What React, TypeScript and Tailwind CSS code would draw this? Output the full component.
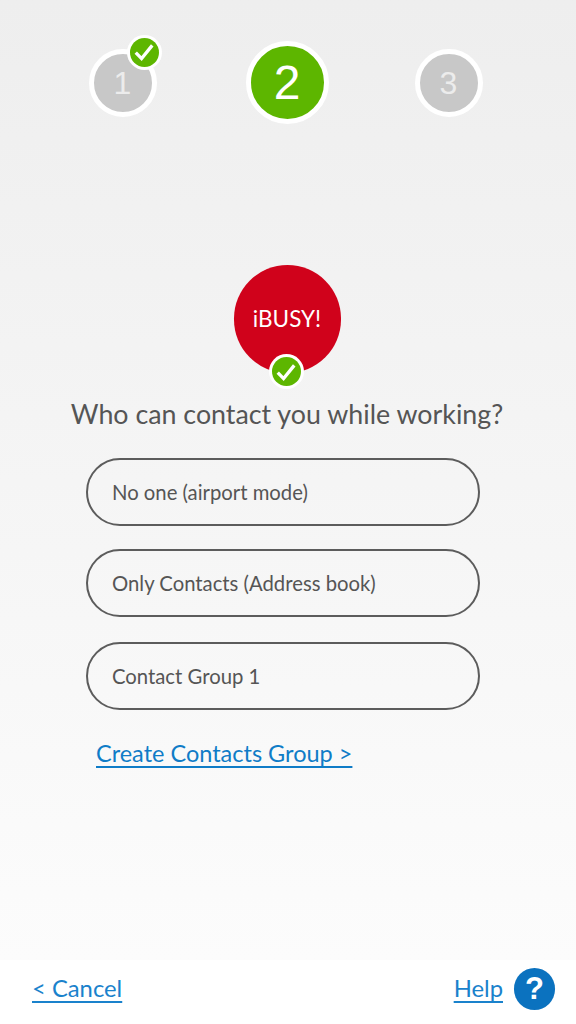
import React from 'react';

const font = "font-['Lato','Noto_Sans',sans-serif]";
const digits = "font-['Liberation_Sans',Arial,sans-serif]";

const CheckBadge = () => (
  <div className="flex h-[35px] w-[35px] items-center justify-center rounded-full bg-white">
    <div className="flex h-[29px] w-[29px] items-center justify-center rounded-full bg-[#5db600]">
      <svg width="22" height="22" viewBox="0 0 20 20" fill="none">
        <path d="M2.5 10.5 L7.8 16 L17.5 4" stroke="white" strokeWidth="3" />
      </svg>
    </div>
  </div>
);

const Step = ({ n }: { n: number }) => (
  <div className={`flex h-[68px] w-[68px] items-center justify-center rounded-full border-[5px] border-white bg-[#c8c8c8] text-[32px] text-[#ececec] ${digits}`}>
    {n}
  </div>
);

const Option = ({ label, className }: { label: string; className?: string }) => (
  <button className={`flex h-[68px] w-[394px] items-center rounded-full border-2 border-[#5c5c5c] pl-[24px] text-[20.3px] text-[#555555] ${className ?? ''}`}>
    {label}
  </button>
);

export default function App() {
  return (
    <div className={`flex h-[1024px] w-[576px] flex-col overflow-hidden bg-white ${font}`}>
      <div className="flex h-[960px] flex-col items-center bg-gradient-to-b from-[#eeeeee] to-[#fcfcfc]">
        {/* steps */}
        <div className="ml-[-5px] mt-[41px] flex w-[394px] items-center">
          <div className="relative">
            <Step n={1} />
            <div className="absolute left-[38px] top-[-14px]">
              <CheckBadge />
            </div>
          </div>
          <div className={`ml-[89px] flex h-[83px] w-[83px] items-center justify-center rounded-full border-[5px] border-white bg-[#5db600] text-[48px] text-white ${digits}`}>
            2
          </div>
          <div className="ml-[86px]">
            <Step n={3} />
          </div>
        </div>

        {/* logo */}
        <div className="relative ml-[-2px] mt-[141px] flex h-[108px] w-[107px] items-center justify-center rounded-full bg-[#d0021b] text-[22.5px] text-white">
          iBUSY!
          <div className="absolute left-[35px] top-[89px]">
            <CheckBadge />
          </div>
        </div>

        <h1 className="ml-[-2px] mt-[19px] text-[26.8px] leading-[44px] text-[#555555]">
          Who can contact you while working?
        </h1>

        {/* options */}
        <div className="mt-[22px] ml-[-10px] flex flex-col">
          <Option label="No one (airport mode)" />
          <Option label="Only Contacts (Address book)" className="mt-[23px]" />
          <Option label="Contact Group 1" className="mt-[25px]" />
        </div>

        <a className="mt-[26px] self-start pl-[96px] text-[23.5px] text-[#0f7cc7] underline underline-offset-[4px]">
          Create Contacts Group &gt;
        </a>
      </div>

      {/* footer */}
      <div className="flex h-[64px] items-center justify-between pb-[6px] pl-[32px] pr-[21px] text-[23.8px] text-[#1a82cc]">
        <a className="underline underline-offset-[4px]">&lt; Cancel</a>
        <div className="flex items-center gap-[11px]">
          <a className="underline underline-offset-[4px]">Help</a>
          <div className={`flex h-[42px] w-[41px] items-center justify-center rounded-full bg-[#0b72bf] text-[31px] font-bold text-white ${digits}`}>
            ?
          </div>
        </div>
      </div>
    </div>
  );
}
